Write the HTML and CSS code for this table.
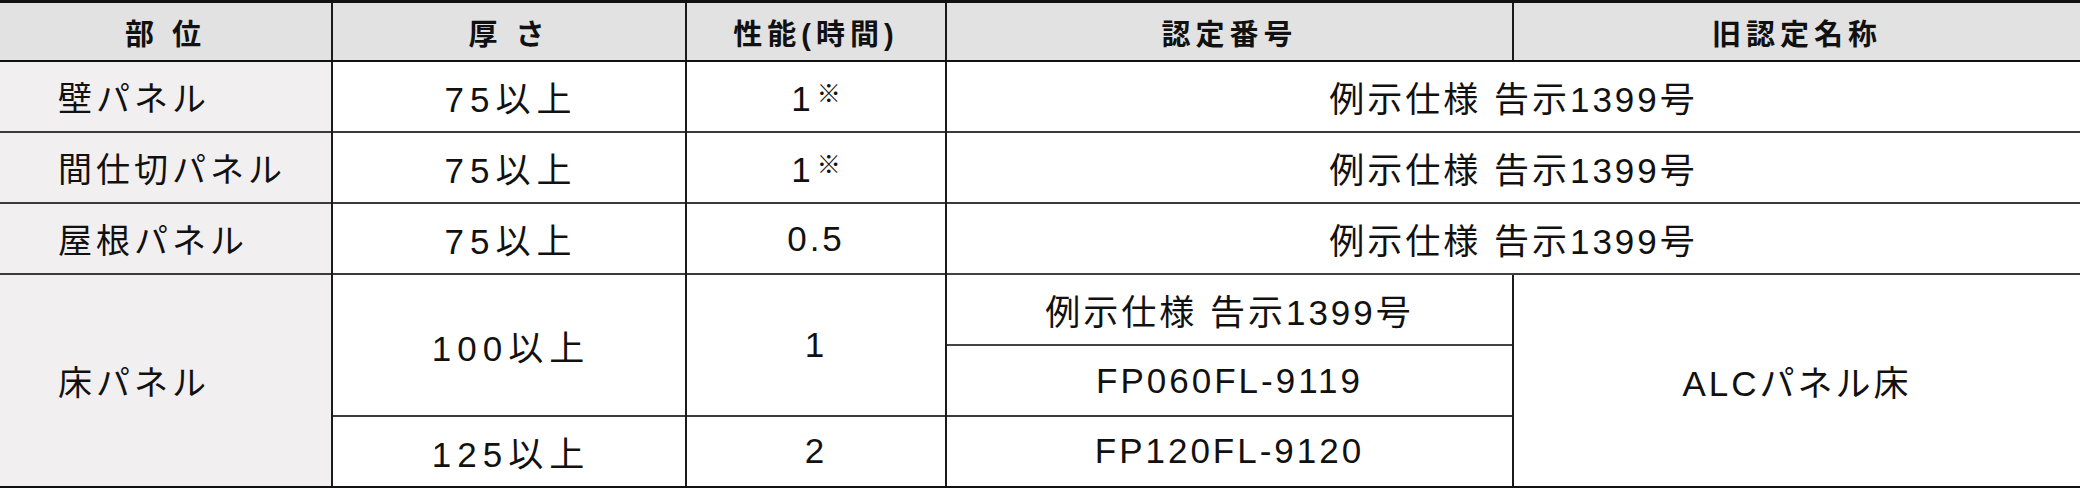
FILE: index.html
```html
<!DOCTYPE html>
<html lang="ja">
<head>
<meta charset="utf-8">
<title>耐火性能</title>
<link rel="stylesheet" href="styles.css">
</head>
<body>
<table class="spec">
  <colgroup>
    <col class="c1"><col class="c2"><col class="c3"><col class="c4"><col class="c5">
  </colgroup>
  <thead>
    <tr class="head">
      <th>部 位</th>
      <th>厚 さ</th>
      <th>性能(時間)</th>
      <th class="wide">認定番号</th>
      <th>旧認定名称</th>
    </tr>
  </thead>
  <tbody>
    <tr>
      <td class="part">壁パネル</td>
      <td class="thick">75以上</td>
      <td>1<span class="note">※</span></td>
      <td colspan="2">例示仕様 告示1399号</td>
    </tr>
    <tr>
      <td class="part">間仕切パネル</td>
      <td class="thick">75以上</td>
      <td>1<span class="note">※</span></td>
      <td colspan="2">例示仕様 告示1399号</td>
    </tr>
    <tr>
      <td class="part">屋根パネル</td>
      <td class="thick">75以上</td>
      <td>0.5</td>
      <td colspan="2">例示仕様 告示1399号</td>
    </tr>
    <tr>
      <td class="part" rowspan="3">床パネル</td>
      <td class="thick" rowspan="2">100以上</td>
      <td rowspan="2">1</td>
      <td class="sub">例示仕様 告示1399号</td>
      <td rowspan="3">ALCパネル床</td>
    </tr>
    <tr>
      <td class="sub">FP060FL-9119</td>
    </tr>
    <tr class="last">
      <td class="thick">125以上</td>
      <td>2</td>
      <td>FP120FL-9120</td>
    </tr>
  </tbody>
</table>
</body>
</html>
```

FILE: styles.css
```css
html, body {
  margin: 0;
  padding: 0;
  background: #ffffff;
}

body {
  font-family: "Liberation Sans", "Noto Sans CJK JP", sans-serif;
  color: #111111;
}

.spec {
  width: 2080px;
  border-collapse: collapse;
  table-layout: fixed;
  border-top: 3px solid #111111;
  border-bottom: 3px solid #111111;
}

.c1 { width: 332px; }
.c2 { width: 354px; }
.c3 { width: 260px; }
.c4 { width: 567px; }
.c5 { width: 567px; }

.spec th,
.spec td {
  padding: 0;
  text-align: center;
  vertical-align: middle;
  border-left: 2px solid #1a1a1a;
  border-top: 2px solid #3a3a3a;
  white-space: nowrap;
}

.spec th:first-child,
.spec tr > td.part {
  border-left: none;
}

.head th {
  height: 57px;
  background: #e2e2e2;
  font-weight: 700;
  font-size: 29px;
  letter-spacing: 5px;
  border-bottom: 2px solid #111111;
  border-top: none;
}

.spec tbody tr {
  height: 71px;
}

.spec tbody td {
  font-size: 35px;
  letter-spacing: 3px;
}

.spec td.thick {
  letter-spacing: 6px;
  padding-left: 4px;
}

.spec td.part {
  background: #f1eff0;
  text-align: left;
  padding-left: 58px;
  font-size: 34px;
  letter-spacing: 4px;
}

.spec td.sub {
  border-top-color: #444444;
}

.note {
  font-size: 24px;
  font-weight: 700;
  letter-spacing: 0;
  vertical-align: 9px;
  margin-left: 3px;
}
```
